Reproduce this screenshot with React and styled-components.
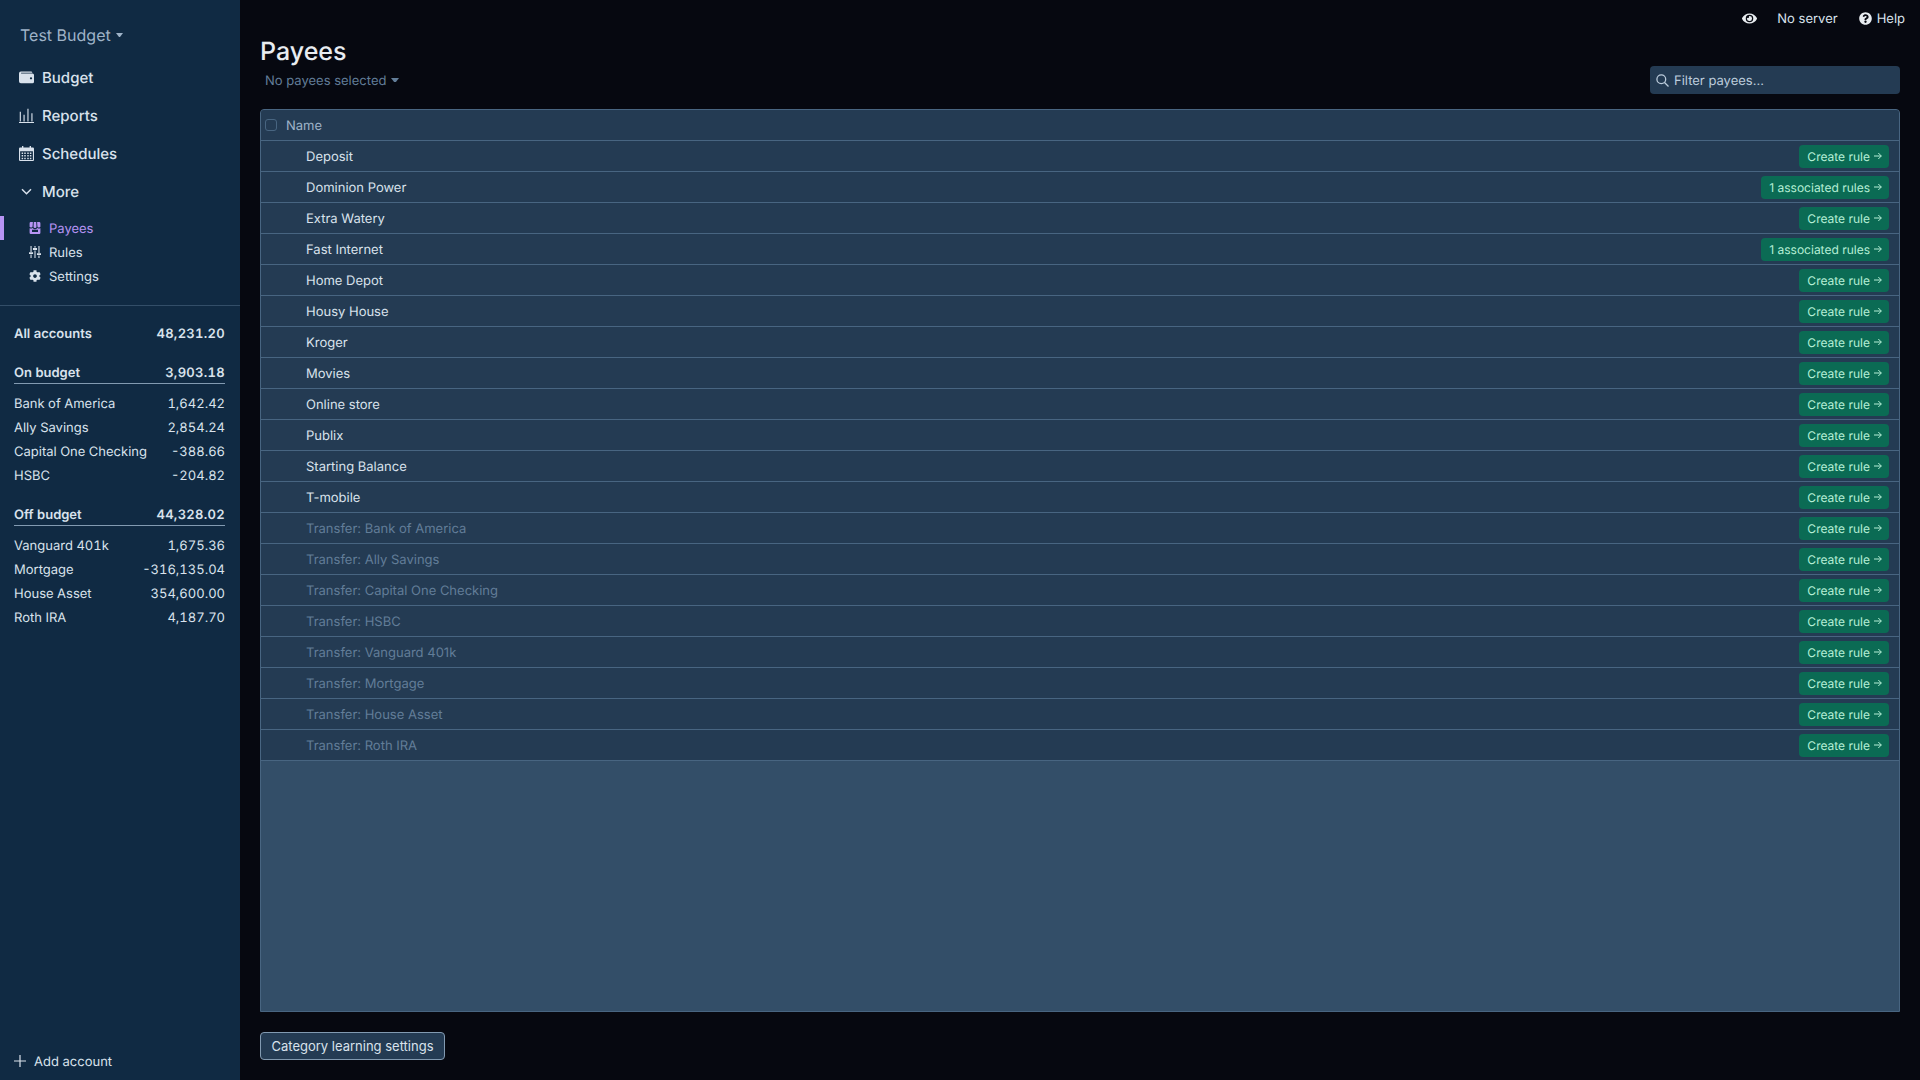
import React from 'react';
import styled, { createGlobalStyle } from 'styled-components';
import { FaCog, FaEye, FaQuestionCircle } from 'react-icons/fa';

const GlobalStyle = createGlobalStyle`
  html, body { margin: 0; padding: 0; height: 100%; background: #060810; }
  #root { height: 100%; }
  * { box-sizing: border-box; }
  body {
    font-family: Inter, "Liberation Sans", sans-serif;
    font-size: 13px;
    line-height: 19px;
    overflow: hidden;
    text-rendering: geometricPrecision;
  }
`;

const Label = styled.span`
  padding-top: 2px;
`;

const TotalAmount = styled(Label)`
  letter-spacing: 0.3px;
`;

const Shell = styled.div`
  display: grid;
  grid-template-columns: 240px 1fr;
  width: 1920px;
  height: 1080px;
`;

const Sidebar = styled.aside`
  display: flex;
  flex-direction: column;
  background: #102a43;
  color: #d9e2ec;
`;

const BudgetName = styled.div`
  display: flex;
  align-items: center;
  gap: 5px;
  height: 30px;
  margin: 20px 0 0 20px;
  font-size: 16px;
  color: #9fb3c8;
`;

const NavList = styled.nav`
  display: flex;
  flex-direction: column;
  margin-top: 8px;
`;

const NavItem = styled.div`
  display: flex;
  align-items: center;
  height: 38px;
  padding-left: 19px;
  gap: 8px;
  font-size: 15px;
  font-weight: 500;
  color: #d9e2ec;
  svg { flex: none; width: 15px; height: 15px; color: #d9e2ec; }
`;

const SubList = styled.div`
  display: flex;
  flex-direction: column;
  margin-top: 6px;
  padding-bottom: 17px;
  border-bottom: 1px solid #334e68;
`;

const SubItem = styled.div`
  display: flex;
  align-items: center;
  height: 24px;
  padding-left: ${p => (p.$active ? '25px' : '29px')};
  gap: 8px;
  font-size: 13px;
  color: ${p => (p.$active ? '#b794f4' : '#d9e2ec')};
  border-left: ${p => (p.$active ? '4px solid #b794f4' : 'none')};
  svg { flex: none; width: 12px; height: 12px; }
`;

const Accounts = styled.div`
  display: flex;
  flex-direction: column;
  padding: 15px 15px 0 14px;
  font-variant-numeric: tabular-nums;
`;

const AccountRow = styled.div`
  display: flex;
  justify-content: space-between;
  align-items: center;
  height: 24px;
  color: #d9e2ec;
`;

const TotalRow = styled(AccountRow)`
  font-weight: 600;
  margin-top: ${p => (p.$first ? '0' : '16px')};
  ${p => p.$line && `
    height: 23px;
    border-bottom: 1px solid #829ab1;
    margin-bottom: 7px;
  `}
`;

const AddAccount = styled.div`
  display: flex;
  align-items: center;
  gap: 8px;
  margin-top: auto;
  height: 38px;
  padding-left: 14px;
  color: #d9e2ec;
  svg { width: 12px; height: 12px; }
`;

const Main = styled.main`
  display: flex;
  flex-direction: column;
  min-width: 0;
  padding: 0 20px;
  background: #060810;
`;

const Titlebar = styled.div`
  display: flex;
  align-items: center;
  justify-content: flex-end;
  height: 36px;
  margin-right: -5px;
  color: #d9e2ec;
`;

const ServerStatus = styled(Label)`
  margin: 0 21px 0 20px;
`;

const EyeIcon = styled(FaEye)`
  width: 15px;
  height: 15px;
  color: #e8ecf0;
`;

const HelpLink = styled.span`
  display: flex;
  align-items: center;
  gap: 5px;
  svg { width: 13px; height: 13px; color: #e8ecf0; }
`;

const PageTitle = styled.h1`
  margin: 0;
  height: 30px;
  font-size: 25px;
  line-height: 32px;
  font-weight: 500;
  color: #e8ecf0;
`;

const Toolbar = styled.div`
  display: flex;
  align-items: center;
  justify-content: space-between;
  height: 28px;
  margin-bottom: 15px;
`;

const SelectedMenu = styled.div`
  display: flex;
  align-items: center;
  gap: 5px;
  padding-left: 5px;
  color: #627d98;
`;

const Filter = styled.div`
  display: flex;
  align-items: center;
  gap: 5px;
  width: 250px;
  height: 28px;
  padding-left: 6px;
  border-radius: 4px;
  background: #243b53;
  color: #bcccdc;
  svg { flex: none; width: 13px; height: 13px; }
`;

const Table = styled.div`
  display: flex;
  flex-direction: column;
  flex: 1;
  min-height: 0;
  background: #334e68;
  border: 1px solid #486581;
  border-radius: 4px 4px 0 0;
  overflow: hidden;
`;

const HeaderRow = styled.div`
  display: flex;
  align-items: center;
  flex: none;
  height: 31px;
  padding-left: 4px;
  gap: 9px;
  background: #243b53;
  border-bottom: 1px solid #486581;
  color: #9fb3c8;
`;

const Checkbox = styled.span`
  width: 12px;
  height: 12px;
  border: 1px solid #486581;
  border-radius: 3px;
`;

const PayeeRow = styled.div`
  display: flex;
  align-items: center;
  justify-content: space-between;
  flex: none;
  height: 31px;
  padding: 0 10px 0 45px;
  background: #243b53;
  border-bottom: 1px solid #486581;
  color: ${p => (p.$muted ? '#627d98' : '#d9e2ec')};
`;

const RuleButton = styled.span`
  display: flex;
  align-items: center;
  gap: 4px;
  height: 23px;
  padding: 0 7px 0 8px;
  border-radius: 4px;
  background: #0b6b54;
  color: #b6efd6;
  font-size: 12px;
`;

const Footer = styled.div`
  display: flex;
  flex: none;
  padding: 20px 0;
`;

const LearningButton = styled.button`
  height: 28px;
  width: 185px;
  padding: 0;
  border: 1px solid #829ab1;
  border-radius: 4px;
  background: #243b53;
  color: #d9e2ec;
  font: inherit;
`;

const Caret = ({ width = 8 }) => (
  <svg width={width} height={width * 0.6} viewBox="0 0 10 6" fill="currentColor">
    <path d="M0 0h10L5.700 5.600a.9.9 0 0 1-1.400 0z" />
  </svg>
);

const Wallet = () => (
  <svg viewBox="0 0 20 20" fill="currentColor">
    <path d="M2.500 2h13.500a1.800 1.800 0 0 1 1.800 1.500H3.200c-.6 0-.6 1 0 1H18a2 2 0 0 1 2 2v9a2 2 0 0 1-2 2H2.500A2.500 2.500 0 0 1 0 15V4.500A2.500 2.500 0 0 1 2.500 2zM16 9.500a1.500 1.500 0 1 0 0 3 1.500 1.500 0 0 0 0-3z" />
  </svg>
);

const Bars = () => (
  <svg viewBox="0 0 20 20" fill="currentColor">
    <path d="M0 18.600h20V20H0zM1 5h1.500v13H1zM6 9h1.500v9H6zM11.200 1h1.500v17h-1.500zM16.500 7H18v11h-1.500z" />
  </svg>
);

const Calendar = () => (
  <svg viewBox="0 0 20 20" fill="currentColor">
    <path fillRule="evenodd" d="M4 0h1.800v2h8.400V0H16v2h2.500A1.500 1.500 0 0 1 20 3.500v15a1.500 1.500 0 0 1-1.500 1.500h-17A1.500 1.500 0 0 1 0 18.500v-15A1.500 1.500 0 0 1 1.500 2H4zM1.500 7v11.500h17V7z" />
    <path d="M3.500 8.500h2v2h-2zM7 8.500h2v2H7zM11 8.500h2v2h-2zM14.500 8.500h2v2h-2zM3.500 12h2v2h-2zM7 12h2v2H7zM11 12h2v2h-2zM14.500 12h2v2h-2zM3.500 15.500h2v2h-2zM7 15.500h2v2H7zM11 15.500h2v2h-2zM14.500 15.500h2v2h-2z" />
  </svg>
);

const Chevron = () => (
  <svg viewBox="0 0 20 20" fill="none" stroke="currentColor" strokeWidth="2">
    <path d="M4 7l6 6 6-6" />
  </svg>
);

const Store = () => (
  <svg viewBox="0 0 20 20" fill="currentColor">
    <path fillRule="evenodd" d="M3 0h3.500L6 7a2 2 0 0 1-2 2 3 3 0 0 1-3-1V2a2 2 0 0 1 2-2zM13.500 0H17a2 2 0 0 1 2 2v6a3 3 0 0 1-3 1 2 2 0 0 1-2-2zM8 0h4l.5 7.500a2.500 2.500 0 0 1-5 0zM1 10.500a5 5 0 0 0 5-.5 5.500 5.500 0 0 0 8 0 5 5 0 0 0 5 .5V18a2 2 0 0 1-2 2H3a2 2 0 0 1-2-2zM5 13v3.500h10V13z" />
  </svg>
);

const Sliders = () => (
  <svg viewBox="0 0 20 20" fill="currentColor">
    <path d="M2.500 0h1.800v10H2.500zM2.500 14h1.800v6H2.500zM0 10.500h6.800v3H0zM9.100 0h1.800v3H9.100zM9.100 7.500h1.800V20H9.100zM6.600 3.500h6.800v3H6.600zM15.700 0h1.800v11.500h-1.800zM15.700 16h1.800v4h-1.800zM13.200 12H20v3h-6.800z" />
  </svg>
);

const Plus = () => (
  <svg viewBox="0 0 12 12" fill="none" stroke="currentColor" strokeWidth="1.2">
    <path d="M6 0v12M0 6h12" />
  </svg>
);

const Search = () => (
  <svg viewBox="0 0 13 13" fill="none" stroke="currentColor" strokeWidth="1.300">
    <circle cx="5.300" cy="5.300" r="4.400" />
    <path d="M8.500 8.500L12.500 12.500" />
  </svg>
);

const Arrow = () => (
  <svg width="8" height="8" viewBox="0 0 8 8" fill="none" stroke="currentColor" strokeWidth="1">
    <path d="M0 4h7.300M4.300 1l3 3-3 3" />
  </svg>
);

const payees = [
  { name: 'Deposit' },
  { name: 'Dominion Power', rules: 1 },
  { name: 'Extra Watery' },
  { name: 'Fast Internet', rules: 1 },
  { name: 'Home Depot' },
  { name: 'Housy House' },
  { name: 'Kroger' },
  { name: 'Movies' },
  { name: 'Online store' },
  { name: 'Publix' },
  { name: 'Starting Balance' },
  { name: 'T-mobile' },
  { name: 'Transfer: Bank of America', transfer: true },
  { name: 'Transfer: Ally Savings', transfer: true },
  { name: 'Transfer: Capital One Checking', transfer: true },
  { name: 'Transfer: HSBC', transfer: true },
  { name: 'Transfer: Vanguard 401k', transfer: true },
  { name: 'Transfer: Mortgage', transfer: true },
  { name: 'Transfer: House Asset', transfer: true },
  { name: 'Transfer: Roth IRA', transfer: true },
];

const onBudget = [
  ['Bank of America', '1,642.42'],
  ['Ally Savings', '2,854.24'],
  ['Capital One Checking', '-388.66'],
  ['HSBC', '-204.82'],
];

const offBudget = [
  ['Vanguard 401k', '1,675.36'],
  ['Mortgage', '-316,135.04'],
  ['House Asset', '354,600.00'],
  ['Roth IRA', '4,187.70'],
];

const AccountList = ({ items }) =>
  items.map(([name, amount]) => (
    <AccountRow key={name}>
      <Label>{name}</Label>
      <Label>{amount}</Label>
    </AccountRow>
  ));

export default function App() {
  return (
    <Shell>
      <GlobalStyle />
      <Sidebar>
        <BudgetName>
          Test Budget
          <Caret width={7} />
        </BudgetName>
        <NavList>
          <NavItem><Wallet />Budget</NavItem>
          <NavItem><Bars />Reports</NavItem>
          <NavItem><Calendar />Schedules</NavItem>
          <NavItem><Chevron />More</NavItem>
        </NavList>
        <SubList>
          <SubItem $active><Store /><Label>Payees</Label></SubItem>
          <SubItem><Sliders /><Label>Rules</Label></SubItem>
          <SubItem><FaCog /><Label>Settings</Label></SubItem>
        </SubList>
        <Accounts>
          <TotalRow $first><Label>All accounts</Label><TotalAmount>48,231.20</TotalAmount></TotalRow>
          <TotalRow $line><Label>On budget</Label><TotalAmount>3,903.18</TotalAmount></TotalRow>
          <AccountList items={onBudget} />
          <TotalRow $line><Label>Off budget</Label><TotalAmount>44,328.02</TotalAmount></TotalRow>
          <AccountList items={offBudget} />
        </Accounts>
        <AddAccount><Plus /><Label>Add account</Label></AddAccount>
      </Sidebar>
      <Main>
        <Titlebar>
          <EyeIcon />
          <ServerStatus>No server</ServerStatus>
          <HelpLink><FaQuestionCircle /><Label>Help</Label></HelpLink>
        </Titlebar>
        <PageTitle>Payees</PageTitle>
        <Toolbar>
          <SelectedMenu>
            <Label>No payees selected</Label>
            <Caret />
          </SelectedMenu>
          <Filter><Search /><Label>Filter payees...</Label></Filter>
        </Toolbar>
        <Table>
          <HeaderRow>
            <Checkbox />
            <Label>Name</Label>
          </HeaderRow>
          {payees.map(p => (
            <PayeeRow key={p.name} $muted={p.transfer}>
              <Label>{p.name}</Label>
              <RuleButton>
                {p.rules ? `${p.rules} associated rules` : 'Create rule'}
                <Arrow />
              </RuleButton>
            </PayeeRow>
          ))}
        </Table>
        <Footer>
          <LearningButton>Category learning settings</LearningButton>
        </Footer>
      </Main>
    </Shell>
  );
}
